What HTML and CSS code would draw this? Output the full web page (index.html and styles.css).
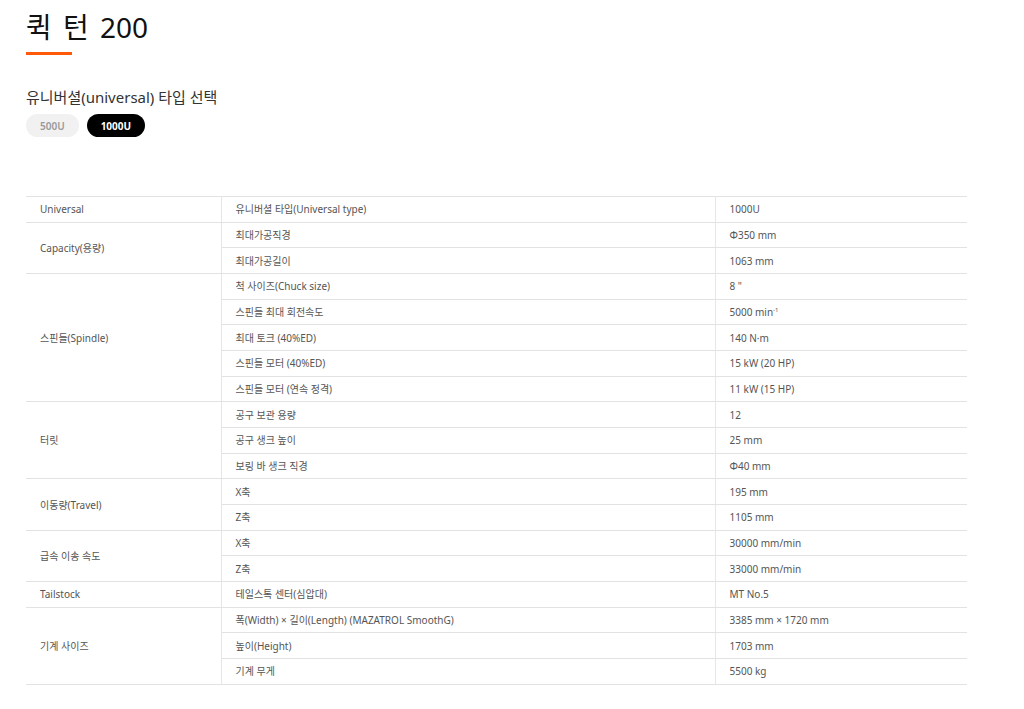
FILE: index.html
```html
<!DOCTYPE html>
<html lang="ko">
<head>
<meta charset="utf-8">
<title>퀵 턴 200</title>
<link rel="stylesheet" href="styles.css">
</head>
<body>
<div class="page">
  <h1 class="title">퀵 턴 200</h1>
  <div class="title-bar"></div>
  <h2 class="subtitle">유니버셜(universal) 타입 선택</h2>
  <div class="types">
    <span class="pill">500U</span>
    <span class="pill active">1000U</span>
  </div>
  <table class="spec">
    <colgroup>
      <col class="c1"><col class="c2"><col class="c3">
    </colgroup>
    <tbody>
      <tr><td>Universal</td><td>유니버셜 타입(Universal type)</td><td>1000U</td></tr>
      <tr><td rowspan="2">Capacity(용량)</td><td>최대가공직경</td><td>Φ350 mm</td></tr>
      <tr><td>최대가공길이</td><td>1063 mm</td></tr>
      <tr><td rowspan="5">스핀들(Spindle)</td><td>척 사이즈(Chuck size)</td><td>8 "</td></tr>
      <tr><td>스핀들 최대 회전속도</td><td>5000 min<sup>-1</sup></td></tr>
      <tr><td>최대 토크 (40%ED)</td><td>140 N·m</td></tr>
      <tr><td>스핀들 모터 (40%ED)</td><td>15 kW (20 HP)</td></tr>
      <tr><td>스핀들 모터 (연속 정격)</td><td>11 kW (15 HP)</td></tr>
      <tr><td rowspan="3">터릿</td><td>공구 보관 용량</td><td>12</td></tr>
      <tr><td>공구 생크 높이</td><td>25 mm</td></tr>
      <tr><td>보링 바 생크 직경</td><td>Φ40 mm</td></tr>
      <tr><td rowspan="2">이동량(Travel)</td><td>X축</td><td>195 mm</td></tr>
      <tr><td>Z축</td><td>1105 mm</td></tr>
      <tr><td rowspan="2">급속 이송 속도</td><td>X축</td><td>30000 mm/min</td></tr>
      <tr><td>Z축</td><td>33000 mm/min</td></tr>
      <tr><td>Tailstock</td><td>테일스톡 센터(심압대)</td><td>MT No.5</td></tr>
      <tr><td rowspan="3">기계 사이즈</td><td>폭(Width) × 길이(Length) (MAZATROL SmoothG)</td><td>3385 mm × 1720 mm</td></tr>
      <tr><td>높이(Height)</td><td>1703 mm</td></tr>
      <tr><td>기계 무게</td><td>5500 kg</td></tr>
    </tbody>
  </table>
</div>
</body>
</html>
```

FILE: styles.css
```css
html, body {
  margin: 0;
  padding: 0;
  background: #fff;
}
body {
  font-family: "Noto Sans", "Noto Sans CJK KR", sans-serif;
  color: #333;
}
.page {
  padding: 7px 0 0 26px;
}
.title {
  margin: 0;
  font-size: 28px;
  font-weight: 400;
  line-height: 40px;
  word-spacing: 4px;
  color: #111;
}
.title-bar {
  margin-top: 5px;
  width: 46px;
  height: 3px;
  background: #ff5a0a;
}
.subtitle {
  margin: 32px 0 0;
  font-size: 15px;
  font-weight: 400;
  line-height: 20px;
  color: #333;
}
.types {
  display: flex;
  gap: 8px;
  margin-top: 7px;
}
.pill {
  display: inline-flex;
  align-items: center;
  height: 23px;
  padding: 0 14px;
  border-radius: 12px;
  background: #f1f1f1;
  color: #999;
  font-size: 10px;
  font-weight: 600;
}
.pill.active {
  background: #000;
  color: #fff;
  font-weight: 700;
}
.spec {
  margin-top: 59px;
  width: 941px;
  border-collapse: collapse;
  table-layout: fixed;
  border-top: 1px solid #e2e2e2;
  font-size: 10px;
  color: #555;
}
.c1 { width: 195px; }
.c2 { width: 494px; }
.c3 { width: 252px; }
.spec tr {
  height: 25.68px;
}
.spec td {
  padding: 0 14px;
  border-bottom: 1px solid #e2e2e2;
  border-right: 1px solid #e6e6e6;
  vertical-align: middle;
  line-height: 14px;
  white-space: nowrap;
}
.spec td:last-child {
  border-right: none;
}
.spec sup {
  font-size: 6px;
  line-height: 0;
  vertical-align: 4px;
}
```
